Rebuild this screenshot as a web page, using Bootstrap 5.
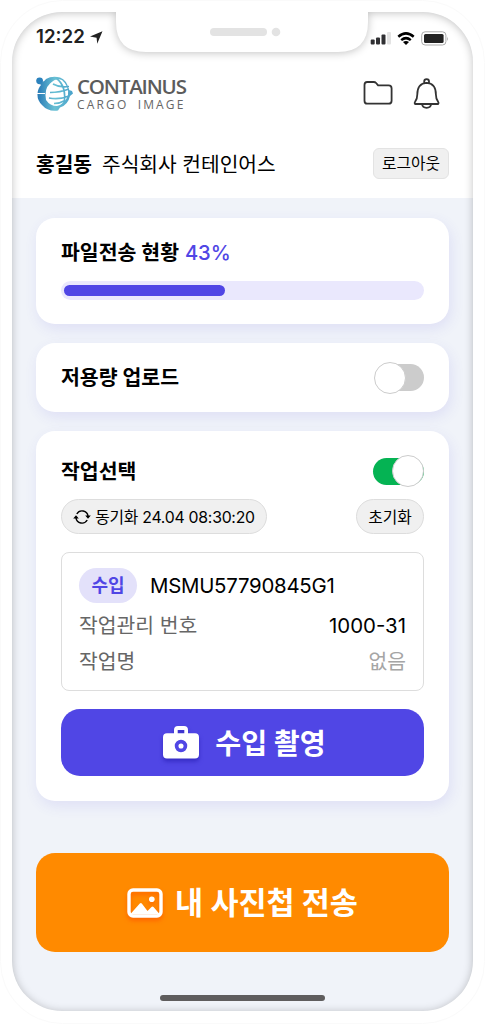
<!DOCTYPE html>
<html lang="ko">
<head>
<meta charset="utf-8">
<meta name="viewport" content="width=device-width, initial-scale=1">
<title>CONTAINUS Cargo Image</title>
<link href="https://cdn.jsdelivr.net/npm/bootstrap@5.3.0/dist/css/bootstrap.min.css" rel="stylesheet">
<style>
body{font-family:Inter,"Noto Sans CJK KR",sans-serif;color:#000;background:#fff;overflow:hidden}
.phone{width:485px;height:1024px;padding:12px}
.screen{width:461px;height:1000px;border-radius:50px;background:#f0f3f9;overflow:hidden}
.bezel{left:0;top:0;z-index:5;pointer-events:none}
.app-head{height:186px;padding:0 24px;background:#fff}
.status{height:52px;margin:0 -1px 0 0}
.clock{font-size:18.7px;font-weight:600;color:#222;line-height:1;margin-top:-1px}
.brand-row{height:60px}
.brand-a{font:600 20.5px/23px "Open Sans",sans-serif;letter-spacing:-1.15px;color:#5c5c5c}
.brand-b{font:400 12px/13px "Open Sans",sans-serif;letter-spacing:2.15px;word-spacing:4px;color:#666}
.user-row{height:72px;padding-top:6px}
.t20{font-size:20.3px;line-height:24px;padding-top:3px}
.logout{width:76px;height:31px;border:1px solid #e3e3e3;border-radius:6px;background:#f0f0f0;font-size:15.8px}
.logout span{position:relative;top:1px}
.panel{border:0;border-radius:19px;padding:0 25px;box-shadow:2px 5px 14px rgba(80,70,220,.11)}
.title{font-size:20.5px;font-weight:700;line-height:24px}
.pct{color:#5046e5;font-weight:500;font-size:20.2px;margin-left:1px}
.track{height:19px;border-radius:10px;background:#eae8fd;padding:4px 3px}
.track .progress-bar{height:11px;border-radius:6px;background:#5046e5}
.switch{width:51px;height:32px}
.switch i{height:27px;width:100%;border-radius:14px;background:#ccc}
.switch:not(.on) i{width:44px;margin-left:7px}
.switch b{width:32px;height:32px;border-radius:50%;background:#fff;border:1px solid #ccc;top:0;left:1px}
.switch.on i{background:#05b353}.switch.on b{left:auto;right:0}
.pill{height:35px;border:1px solid #ddd;border-radius:18px;background:#f0f0f0;font-size:15.8px;padding-top:2px}
.stamp{letter-spacing:-.25px}
.job{height:139px;margin-top:18px;border:1px solid #ddd;border-radius:8px;padding:15px 17px 0;font-size:20.4px}
.code{letter-spacing:-.25px;margin-left:13px;padding-top:2px}
.tag{width:58px;height:35px;border-radius:18px;background:#e3e1fa;color:#5046e5;font-weight:700;font-size:18px}
.dim{color:#666}.none{color:#a5a5a5}
.shoot{height:67px;margin-top:18px;border-radius:19px;background:#5046e5;color:#fff;font-size:28.2px;font-weight:700}
.send{height:99px;margin-top:52px;border-radius:19px;background:#ff8a00;color:#fff;font-size:30.5px;font-weight:700}
.home{width:165px;height:6px;border-radius:3px;background:#5f5d5e;margin-top:43px}
</style>
</head>
<body>
<div class="phone position-relative">
<main class="screen">
 <header class="app-head">
  <div class="status d-flex align-items-center justify-content-between">
   <div class="d-flex align-items-center"><span class="clock">12:22</span>
    <svg style="margin:0 0 0 5px" width="13" height="13" viewBox="0 0 13 13"><path d="M12.500.3 7.200 12.700 6.600 6.800 0 5.600z" fill="#222"/></svg></div>
   <div class="d-flex align-items-center">
    <svg width="80" height="16" viewBox="370 30.500 80 16">
     <g fill="#303033"><rect x="370.700" y="40" width="4" height="5" rx="1"/><rect x="376" y="38" width="4" height="7" rx="1"/><rect x="381.500" y="35" width="4" height="10" rx="1"/></g><rect x="387" y="32.500" width="4" height="12.500" rx="1" fill="#e3e3e3"/>
     <g fill="none" stroke="#000" stroke-width="2.500"><path d="M398.300 37.300q7.700-6.800 15.400 0M401.200 40.600q4.800-4 9.600 0"/></g><path d="M403 42.600q3-2 6 0l-3 2.800z"/>
     <rect x="421.700" y="32.300" width="24.200" height="13.200" rx="3.400" fill="#fff" stroke="#aaa"/><rect x="424" y="34.400" width="19.600" height="9" rx="1.500" fill="#222"/><path d="M447.200 37q1.600 2 0 4.500z" fill="#aaa"/>
    </svg></div>
  </div>
  <div class="brand-row d-flex align-items-center justify-content-between">
   <div class="d-flex align-items-center">
    <svg width="38" height="36" viewBox="0 0 38 36" style="margin-top:-1px">
     <defs><linearGradient id="lg" gradientUnits="userSpaceOnUse" x1="1" x2="36" y1="0" y2="0"><stop stop-color="#2778b5"/><stop offset=".5" stop-color="#68c0d4"/><stop offset="1" stop-color="#4aa3cb"/></linearGradient></defs>
     <circle cx="3.600" cy="4.800" r="3.400" fill="#2b82bd"/>
     <path d="M3 7Q8 6 10 3 16-.5 24 1.500 31 4 33 14L36 15 37 17.500 34 20Q32 29 24 31.500L22 34.500Q12 36 6 29 1 24 1.500 17.500 2 12 5 9z" fill="url(#lg)"/>
     <path d="M14 7.500Q20 1.500 26 4 33 10 32 19 29 28 21 30 14 30 10 24 8 13 14 7.500z" fill="#fff"/>
     <g fill="none" stroke="url(#lg)" stroke-width="1.700"><path d="M20 2Q31 10 28 28M17 8q7 4 16 2.500M14 16.500q10 0 19-3.500M13 22q10 2 20-2M18 27.500q6 0 11-3"/></g>
     <path d="M0 17.500h9" stroke="#fff" stroke-width="1.200"/>
    </svg>
    <div class="text-nowrap" style="margin:-3px 0 0 3px"><div class="brand-a">CONTAINUS</div><div class="brand-b">CARGO IMAGE</div></div>
   </div>
   <svg width="86" height="34" viewBox="363 77 86 34" fill="none" stroke="#333" stroke-width="1.800" stroke-linejoin="round">
    <path d="M367.200 82h6.500q1.500 0 2.400 1l2 2.400h10.500q3 0 3 3v12.300q0 3-3 3h-21.400q-2.700 0-2.700-3V85q0-3 2.700-3z"/>
    <path d="M415 104q-.8-1 .1-2.200 2.200-3 2.200-7.400 0-11 9.300-11.600 9.300.6 9.300 11.600 0 4.400 2.200 7.400.9 1.200.1 2.200zM424.200 83v-1.400q0-2.400 2.400-2.400t2.400 2.400V83M422 104q.5 3.800 4.600 3.800t4.600-3.800"/>
   </svg>
  </div>
  <div class="user-row d-flex align-items-center justify-content-between">
   <div class="t20"><strong>홍길동</strong><span style="margin-left:10px">주식회사 컨테인어스</span></div>
   <button class="logout p-0"><span>로그아웃</span></button>
  </div>
 </header>
 <div class="px-4">
  <section class="card panel" style="height:106px;margin-top:20px;padding-top:23px">
   <div class="title">파일전송 현황 <span class="pct">43%</span></div>
   <div class="track" style="margin-top:16px"><div class="progress-bar" style="width:45%"></div></div>
  </section>
  <section class="card panel flex-row align-items-center justify-content-between" style="height:69px;margin-top:19px">
   <div class="title">저용량 업로드</div>
   <div class="switch d-flex align-items-center position-relative"><i></i><b class="position-absolute"></b></div>
  </section>
  <section class="card panel" style="height:370px;margin-top:19px;padding-top:24px">
   <div class="d-flex align-items-center justify-content-between"><div class="title" style="padding-top:2px">작업선택</div>
    <div class="switch on d-flex align-items-center position-relative"><i></i><b class="position-absolute"></b></div></div>
   <div class="d-flex justify-content-between" style="margin-top:12px">
    <div class="pill d-flex align-items-center justify-content-center" style="width:206px">
     <svg class="me-1" width="18" height="16" viewBox="0 0 18 16" style="margin-top:-2px"><path d="M3.800 5A6 6 0 0 1 15 7.200M14.200 11A6 6 0 0 1 3 8.800" fill="none" stroke="#000" stroke-width="1.400"/><path d="M12.200 6.500h5.600L15 9.800zM.2 9.400h5.600L3 6.200z"/></svg>
     <span class="stamp">동기화 24.04 08:30:20</span></div>
    <div class="pill d-flex align-items-center justify-content-center" style="width:68px">초기화</div>
   </div>
   <div class="job">
    <div class="d-flex align-items-center"><span class="tag d-flex align-items-center justify-content-center">수입</span><span class="code">MSMU57790845G1</span></div>
    <div class="d-flex align-items-center justify-content-between" style="height:42px;padding-top:4px"><span class="dim">작업관리 번호</span><span>1000-31</span></div>
    <div class="d-flex align-items-center justify-content-between" style="height:31px;padding-top:3px"><span class="dim">작업명</span><span class="none">없음</span></div>
   </div>
   <div class="shoot d-flex align-items-center justify-content-center">
    <svg width="44" height="44" viewBox="0 0 44 44" style="margin:0 12px 0 0;filter:drop-shadow(0 3px 2px #352bc4)"><path fill="#fff" fill-rule="evenodd" d="M8 12.300h7V9q0-4 4-4h6q4 0 4 4v3.300h7q4 0 4 4v17.200q0 4-4 4H8q-4 0-4-4V16.300q0-4 4-4zM18.700 12.300h6.600V9h-6.600z"/><circle cx="22" cy="25" r="4.400" fill="#fff" stroke="#5046e5" stroke-width="3.700"/></svg>
    <span class="pt-1">수입 촬영</span></div>
  </section>
  <div class="send d-flex align-items-center justify-content-center">
   <svg width="36" height="36" viewBox="0 0 36 36" style="margin-right:12px;filter:drop-shadow(0 3px 2px #ff6500)"><rect x="2" y="5" width="32" height="26" rx="4" fill="none" stroke="#fff" stroke-width="3.400"/><path d="M3 29.500 12.800 18.500q1-1 2 0l5.700 7.500 4-4q1-1 2 0l6.500 7.500z" fill="#fff"/><circle cx="24.800" cy="14.200" r="2.800" fill="#fff"/></svg>
   <span>내 사진첩 전송</span></div>
  <div class="home mx-auto"></div>
 </div>
</main>
<svg class="bezel position-absolute" width="485" height="1024" viewBox="0 0 485 1024">
 <path fill="#fff" fill-rule="evenodd" style="filter:drop-shadow(0 1px 4px rgba(0,0,0,.24))" d="M-20-20H505V1044H-20zM62 12H116V22Q116 52 146 52H338Q368 52 368 22V12H423A50 50 0 0 1 473 62V961A50 50 0 0 1 423 1011H62A50 50 0 0 1 12 961V62A50 50 0 0 1 62 12z"/>
 <rect x=".5" y=".5" width="484" height="1023" rx="62" fill="none" stroke="#fafafa"/>
 <rect x="210" y="28" width="57" height="8" rx="4" fill="#e3e3e3"/><circle cx="276" cy="32" r="4.300" fill="#e3e3e3"/>
</svg>
</div>
<script src="https://cdn.jsdelivr.net/npm/bootstrap@5.3.0/dist/js/bootstrap.bundle.min.js"></script>
</body>
</html>
